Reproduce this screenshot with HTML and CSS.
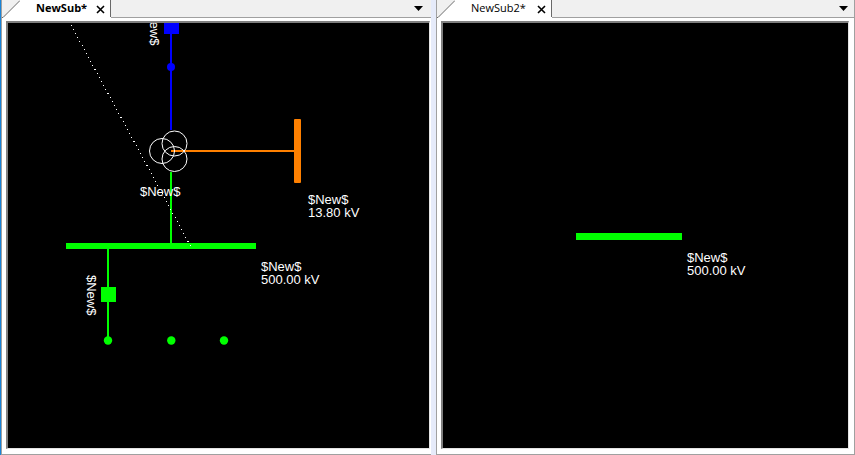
FILE: index.html
```html
<!DOCTYPE html>
<html lang="en">
<head>
<meta charset="utf-8">
<title>Substation diagrams</title>
<link rel="stylesheet" href="styles.css">
</head>
<body>
<main class="workspace">
  <section class="pane pane-first">
    <header class="tabs">
      <div class="tab active">
        <svg class="slope" viewBox="0 0 18 18" aria-hidden="true"><path class="slope-fill" d="M0 18L18 0V18Z"/><path class="slope-edge" d="M0 17.5H1L18 .5"/></svg>
        <a class="name" href="#newsub">NewSub*</a>
        <button class="close" aria-label="Close NewSub"><svg viewBox="0 0 9 9"><path d="M1 1L8 8M8 1L1 8"/></svg></button>
      </div>
      <button class="menu" aria-label="Tab list"><svg viewBox="0 0 9 5"><path d="M0 0H9L4.5 5Z"/></svg></button>
    </header>
    <div class="body">
      <div class="canvas" id="newsub">
        <svg class="diagram">
          <g transform="translate(-8 -23)">
            <g class="blue">
              <rect x="164" y="19" width="15" height="15"/>
              <rect x="170" y="34" width="2" height="96"/>
              <circle cx="171" cy="67" r="4"/>
            </g>
            <g class="green">
              <rect x="170" y="172" width="2" height="71"/>
              <rect x="66" y="243" width="190" height="6"/>
              <rect x="107" y="249" width="2" height="91"/>
              <rect x="101" y="287" width="15" height="15"/>
              <circle cx="108" cy="340.5" r="4.2"/>
              <circle cx="171.3" cy="340.5" r="4.2"/>
              <circle cx="224" cy="340.5" r="4.2"/>
            </g>
            <g class="orange">
              <rect x="171" y="150" width="124" height="2"/>
              <rect x="294" y="119" width="7" height="64" rx="1"/>
            </g>
            <g class="winding">
              <circle cx="162" cy="151" r="12.5"/>
              <circle cx="174.5" cy="143.5" r="12.5"/>
              <circle cx="174.5" cy="159" r="12.5"/>
            </g>
            <path class="dotted" d="M71 25L190.5 246"/>
            <text x="140" y="196">$New$</text>
            <text x="308" y="204">$New$</text>
            <text x="308" y="217">13.80 kV</text>
            <text x="261" y="271">$New$</text>
            <text x="261" y="284">500.00 kV</text>
            <text transform="translate(150 5) rotate(90)">$New$</text>
            <text transform="translate(87 275) rotate(90)">$New$</text>
          </g>
        </svg>
      </div>
    </div>
  </section>
  <section class="pane pane-second">
    <header class="tabs">
      <div class="tab">
        <svg class="slope" viewBox="0 0 18 18" aria-hidden="true"><path class="slope-fill" d="M0 18L18 0V18Z"/><path class="slope-edge" d="M0 17.5H1L18 .5"/></svg>
        <a class="name" href="#newsub2">NewSub2*</a>
        <button class="close" aria-label="Close NewSub2"><svg viewBox="0 0 9 9"><path d="M1 1L8 8M8 1L1 8"/></svg></button>
      </div>
      <button class="menu" aria-label="Tab list"><svg viewBox="0 0 9 5"><path d="M0 0H9L4.5 5Z"/></svg></button>
    </header>
    <div class="body">
      <div class="canvas" id="newsub2">
        <svg class="diagram">
          <g transform="translate(-443 -23)">
            <rect class="green" x="576" y="233" width="106" height="7"/>
            <text x="687" y="262">$New$</text>
            <text x="687" y="275">500.00 kV</text>
          </g>
        </svg>
      </div>
    </div>
  </section>
</main>
</body>
</html>
```
FILE: styles.css
```css
* { box-sizing: border-box; }

body {
  margin: 0;
  background: #e6ebfa;
  font: 11px/16px "Open Sans", "Noto Sans", sans-serif;
  color: #000;
}

.workspace {
  display: flex;
  gap: 5px;
  height: 100vh;
  border-left: 1px solid #1883d7;
}

.pane {
  display: flex;
  flex-direction: column;
  min-width: 0;
  background: #fff;
  border-left: 1px solid #a0a0a0;
  border-bottom: 1px solid #a0a0a0;
}

.pane-first { flex: 429 1 0; }

.pane-second {
  flex: 417 1 0;
  border-right: 1px solid #a0a0a0;
}

.tabs {
  display: flex;
  justify-content: space-between;
  height: 18px;
  background: linear-gradient(#a0a0a0, #a0a0a0) bottom / 100% 1px no-repeat #f0f0f0;
}

.tab {
  display: flex;
  background: linear-gradient(#fff, #fff) right / calc(100% - 18px) 100% no-repeat;
}

.slope {
  width: 18px;
  height: 18px;
}

.slope-fill { fill: #fff; }

.slope-edge {
  fill: none;
  stroke: #696969;
}

.name {
  padding: 0 11px 0 16px;
  color: inherit;
  text-decoration: none;
}

.active .name {
  padding-right: 9px;
  font-weight: bold;
}

button {
  display: flex;
  padding: 0;
  border: 0;
  background: none;
}

.close {
  height: 17px;
  padding: 5px 5px 0 0;
  border-right: 1px solid #696969;
}

.close svg {
  width: 9px;
  height: 9px;
  fill: none;
  stroke: #000;
  stroke-width: 1.6;
}

.menu { padding: 6px 6px 0 0; }

.pane-first .menu { padding-right: 8px; }

.menu svg {
  width: 9px;
  height: 5px;
}

.body {
  display: flex;
  flex: 1;
  min-height: 0;
  padding: 3px 5px 5px 4px;
}

.pane-first .body { padding-right: 1px; }

.canvas {
  flex: 1;
  min-width: 0;
  overflow: hidden;
  background: #000;
  border: solid;
  border-width: 2px 1px 1px 2px;
  border-color: #808080 #e3e3e3 #e3e3e3 #808080;
}

.diagram {
  display: block;
  width: 100%;
  height: 100%;
  font: 13px "Liberation Sans", Arial, sans-serif;
  fill: #fff;
}

.blue { fill: #00f; }
.green { fill: #0f0; }
.orange { fill: #ff8000; }

.winding {
  fill: none;
  stroke: #fff;
}

.dotted {
  fill: none;
  stroke: #fff;
  stroke-dasharray: 1 3.55;
  shape-rendering: crispEdges;
}
```
